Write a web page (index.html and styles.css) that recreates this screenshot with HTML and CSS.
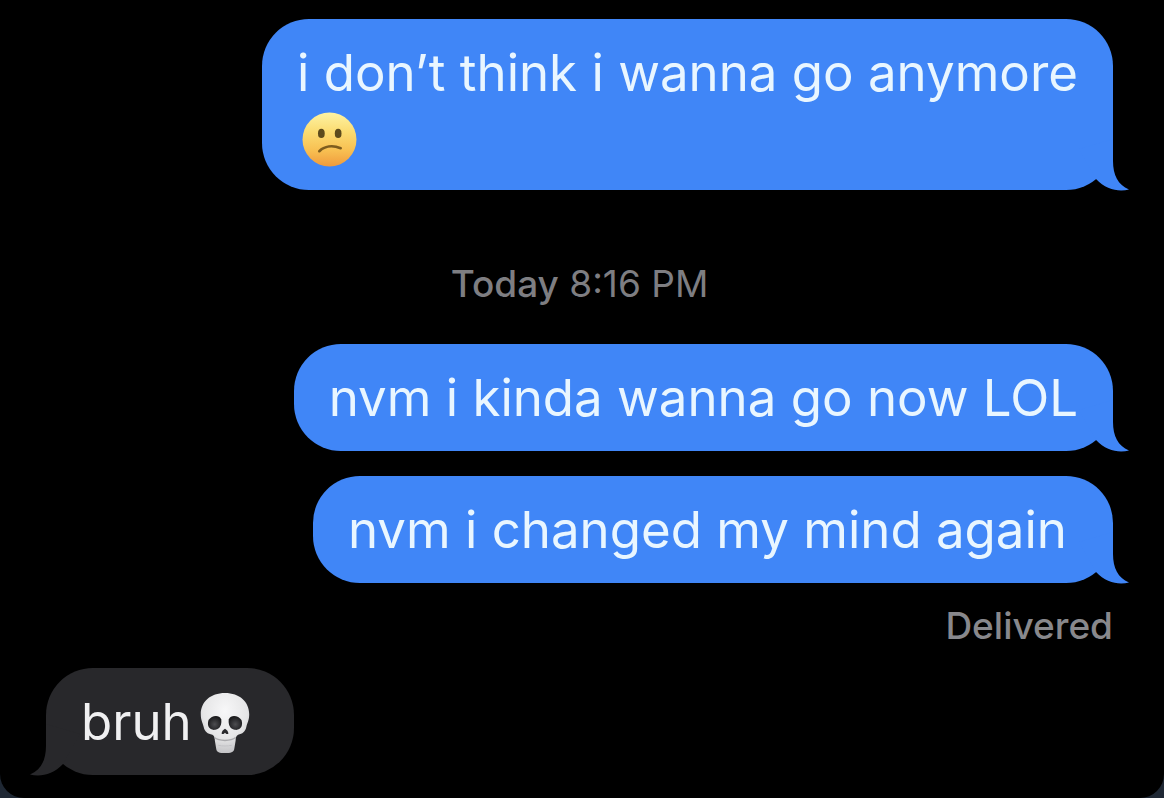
FILE: index.html
```html
<!DOCTYPE html>
<html lang="en">
<head>
<meta charset="utf-8">
<meta name="viewport" content="width=device-width, initial-scale=1">
<title>Messages</title>
<link rel="stylesheet" href="styles.css">
</head>
<body>
<main class="screen">
  <p class="bubble sent">i don’t think i wanna go anymore<br><svg class="emoji face" viewBox="0 0 54 54" role="img" aria-label="Confused face"><defs><linearGradient id="face" x1="0" y1="0" x2="0" y2="1"><stop offset="0" stop-color="#fdf3a4"/><stop offset=".35" stop-color="#fbdc72"/><stop offset=".7" stop-color="#f8c052"/><stop offset="1" stop-color="#f09a3c"/></linearGradient></defs><circle cx="27" cy="27" r="26.500" fill="url(#face)"/><ellipse cx="19" cy="21" rx="3.300" ry="4.500" fill="#5c4a1c"/><ellipse cx="35.500" cy="21" rx="3.300" ry="4.500" fill="#5c4a1c"/><path d="M17 38.500C22 33.500 30 32.500 38 35.500" fill="none" stroke="#7d5c1e" stroke-width="2.600" stroke-linecap="round"/></svg><svg class="tail" viewBox="0 0 50 52" aria-hidden="true"><path d="M0 10L34 0V22C34 36 39 46 50 50.500C40 53 27 51 17 40Z"/></svg></p>

  <time class="stamp"><b>Today</b> 8:16 PM</time>

  <p class="bubble sent">nvm i kinda wanna go now LOL<svg class="tail" viewBox="0 0 50 52" aria-hidden="true"><path d="M0 10L34 0V22C34 36 39 46 50 50.500C40 53 27 51 17 40Z"/></svg></p>
  <p class="bubble sent last">nvm i changed my mind again<svg class="tail" viewBox="0 0 50 52" aria-hidden="true"><path d="M0 10L34 0V22C34 36 39 46 50 50.500C40 53 27 51 17 40Z"/></svg></p>
  <p class="status">Delivered</p>

  <p class="bubble received">bruh<svg class="emoji skull" viewBox="0 0 52 64" role="img" aria-label="Skull"><defs><radialGradient id="bone" cx=".5" cy=".3" r=".75"><stop offset="0" stop-color="#f7f7f8"/><stop offset=".6" stop-color="#e6e6e7"/><stop offset="1" stop-color="#bcbcbf"/></radialGradient><radialGradient id="socket" cx=".5" cy=".6" r=".6"><stop offset="0" stop-color="#4d4d50"/><stop offset="1" stop-color="#161618"/></radialGradient></defs><path d="M26 1C11 1 1 10 1 23C1 29 3 32 4 36C5 41 8 43 13 44C15 45 15.500 47 15.500 50L17 59C17.500 62 20 63 26 63C32 63 35 62 35.500 59L37 50C37 47 37.500 45 39.500 44C44 43 47 41 48 36C49 32 51 29 51 23C51 10 41 1 26 1Z" fill="url(#bone)"/><path d="M9 29C12 24 20 23 22 28C23 33 21 38 16 39C10 40 7 35 9 29Z" fill="url(#socket)"/><path d="M43 29C40 24 32 23 30 28C29 33 31 38 36 39C42 40 45 35 43 29Z" fill="url(#socket)"/><path d="M26 38C24 39 22.500 41 22.500 43C24 44 25 43 26 42C27 43 28 44 29.500 43C29.500 41 28 39 26 38Z" fill="#29292c"/><path d="M15 47C20 51 32 51 37 47" fill="none" stroke="#aaaaad" stroke-width="1.500"/><path d="M19 55C23 56 29 56 33 55" fill="none" stroke="#c2c2c5" stroke-width="1"/></svg><svg class="tail" viewBox="0 0 50 52" aria-hidden="true"><path d="M0 10L34 0V22C34 36 39 46 50 50.500C40 53 27 51 17 40Z"/></svg></p>
</main>
</body>
</html>
```
FILE: styles.css
```css
* {
  box-sizing: border-box;
}

body {
  margin: 0;
  background: #1f2834;
  font-family: Inter, "Liberation Sans", sans-serif;
}

p {
  margin: 0;
}

.screen {
  display: flex;
  flex-direction: column;
  min-height: 100vh;
  padding: 19px 51px 23px 46px;
  background: #000;
  border-radius: 0 0 24px 24px;
}

.bubble {
  position: relative;
  padding: 22px 35px 21px;
  border-radius: 47px;
  font-size: 51px;
  line-height: 64px;
}

.sent {
  align-self: flex-end;
  background: #4086f7;
  color: #e9f6ff;
}

.received {
  align-self: flex-start;
  padding-right: 43px;
  background: #28282b;
  color: #f0f0f1;
}

.sent .tail {
  fill: #4086f7;
}

.tail {
  position: absolute;
  right: -16px;
  bottom: -1px;
  width: 50px;
  height: 52px;
}

.received .tail {
  right: auto;
  left: -16px;
  fill: #28282b;
  transform: scaleX(-1);
}

.emoji {
  display: inline-block;
  vertical-align: middle;
}

.face {
  width: 55px;
  height: 55px;
  margin: -4px 0 0 5px;
}

.skull {
  width: 52px;
  height: 62px;
  margin: -8px 0 -2px 7px;
}

.stamp {
  align-self: center;
  margin: 74px 0 40px;
  color: #7e7e82;
  font-size: 37px;
  line-height: 40px;
}

.stamp b {
  font-weight: 500;
}

.last {
  margin-top: 25px;
  padding-right: 46px;
}

.status {
  align-self: flex-end;
  margin: 23px 0 22px;
  color: #88888c;
  font-size: 37px;
  font-weight: 500;
  line-height: 40px;
}
```
